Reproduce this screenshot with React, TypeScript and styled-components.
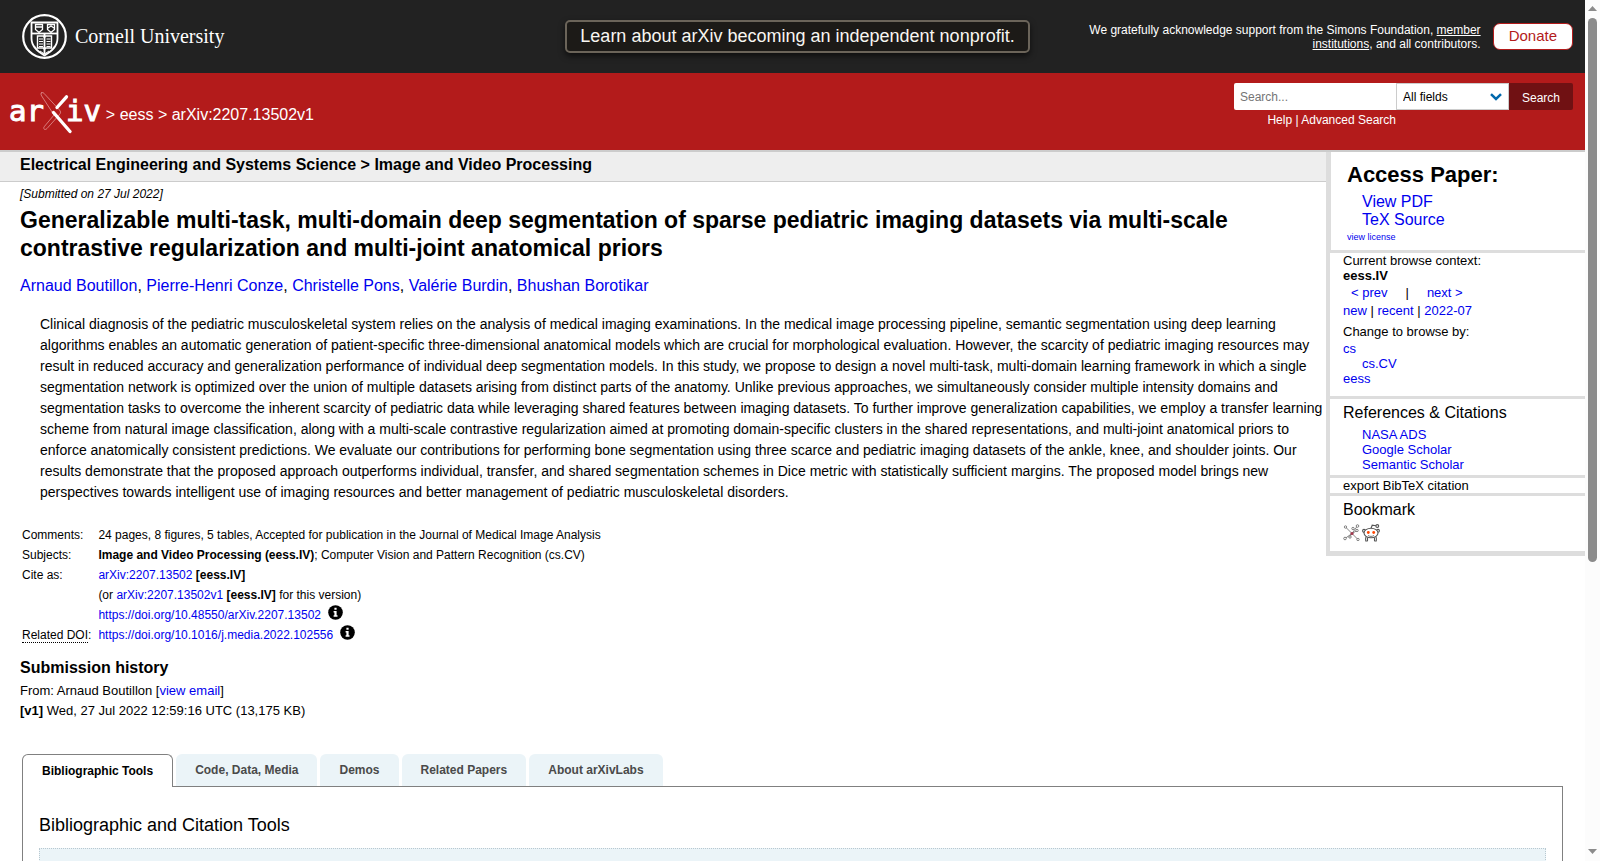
import React from "react";
import styled, { createGlobalStyle } from "styled-components";

const GlobalStyle = createGlobalStyle`
  * { box-sizing: border-box; }
  body {
    margin: 0;
    background: #fff;
    color: #000;
    font-family: "Liberation Sans", Arial, sans-serif;
    font-size: 13px;
  }
  h1, h2, h3, p, ul, blockquote { margin: 0; padding: 0; }
  ul { list-style: none; }
  a { color: #0000ee; text-decoration: none; }
`;

const Window = styled.div`
  display: flex;
  height: 100vh;
  overflow: hidden;
`;

const Page = styled.div`
  flex: 1;
  min-width: 0;
`;

/* ---------- scroll bar ---------- */

const ScrollTrack = styled.div`
  flex: 0 0 15px;
  display: flex;
  flex-direction: column;
  align-items: center;
  background: #fcfcfc;
  padding: 6px 0 7px;
  gap: 7px;
`;

const ScrollRail = styled.div`
  flex: 1;
  width: 9px;
`;

const ScrollThumb = styled.div`
  height: 66%;
  border-radius: 5px;
  background: #8b8b8b;
`;

const ScrollArrow = styled.svg`
  display: block;
  width: 9px;
  height: 5px;
  fill: #8b8b8b;
`;

/* ---------- Cornell bar ---------- */

const TopBar = styled.header`
  display: grid;
  grid-template-columns: 1fr auto 1fr;
  height: 73px;
  padding: 0 12px 0 22px;
  background: #222;
  color: #fff;
`;

const University = styled.a`
  display: flex;
  align-items: center;
  gap: 8px;
  color: #fff;
  font-family: "Liberation Serif", serif;
  font-size: 20px;
`;

const Banner = styled.a`
  align-self: start;
  margin-top: 20px;
  height: 33px;
  padding: 0 13px;
  border: 2px solid #6b6459;
  border-radius: 5px;
  background: #1c1a17;
  box-shadow: 0 3px 6px rgba(0, 0, 0, 0.6);
  color: #f8f6f1;
  font-size: 18px;
  line-height: 28px;
`;

const Support = styled.div`
  display: flex;
  align-items: center;
  justify-content: flex-end;
  gap: 12px;
`;

const SupportText = styled.p`
  width: 400px;
  text-align: right;
  font-size: 12px;
  line-height: 14px;
  a { color: #fff; text-decoration: underline; }
`;

const Donate = styled.a`
  height: 27px;
  padding: 0 15px;
  border: 1px solid #b31b1b;
  border-radius: 7px;
  background: #fff;
  color: #b31b1b;
  font-size: 15px;
  line-height: 24px;
`;

/* ---------- red bar ---------- */

const RedBar = styled.div`
  display: flex;
  justify-content: space-between;
  height: 79px;
  padding: 10px 12px 0 9px;
  border-bottom: 2px solid #ccc;
  background: #b31b1b;
  color: #fff;
  a { color: #fff; }
`;

const Crumbs = styled.div`
  display: flex;
  align-items: center;
  gap: 5px;
  height: 64px;
  font-size: 16px;
`;

const Logo = styled.a`
  display: flex;
  align-items: center;
  margin-bottom: 4px;
  font-family: "DejaVu Sans Mono", monospace;
  font-size: 29px;
  line-height: 36px;
  -webkit-text-stroke: 1px #fff;
  span { padding-bottom: 4px; }
  svg { margin: 0 -6px 0 -4px; }
`;

const SearchForm = styled.form`
  display: flex;
  flex-direction: column;
  font-size: 12px;
`;

const SearchRow = styled.div`
  display: flex;
  height: 27px;
`;

const SearchInput = styled.input`
  width: 162px;
  padding: 0 6px;
  border: 0;
  border-radius: 2px 0 0 2px;
  background: #fff;
  font: 12px "Liberation Sans", Arial, sans-serif;
  &::placeholder { color: #757575; }
`;

const SelectBox = styled.div`
  display: grid;
  align-items: center;
  width: 113px;
  select, svg { grid-area: 1 / 1; }
  svg { justify-self: end; margin-right: 7px; pointer-events: none; }
`;

const FieldSelect = styled.select`
  appearance: none;
  height: 27px;
  padding: 0 6px;
  border: 1px solid #ccc;
  border-radius: 0;
  background: #fff;
  color: #000;
  font: 12px "Liberation Sans", Arial, sans-serif;
`;

const SearchButton = styled.button`
  width: 64px;
  padding: 2px 0 0;
  border: 0;
  border-radius: 0 2px 2px 0;
  background: #701113;
  color: #fff;
  font: 12px "Liberation Sans", Arial, sans-serif;
`;

const SearchHelp = styled.p`
  width: 162px;
  line-height: 20px;
  text-align: right;
`;

/* ---------- paper ---------- */

const Columns = styled.div`
  display: flex;
  align-items: flex-start;
`;

const Paper = styled.main`
  flex: 1;
  min-width: 0;
`;

const SubjectBar = styled.h2`
  height: 30px;
  padding: 0 20px;
  border-bottom: 1px solid #ccc;
  background: #eee;
  font-size: 16px;
  line-height: 25px;
`;

const PaperBody = styled.div`
  padding: 4px 0 0 20px;
`;

const DateLine = styled.p`
  font-size: 12px;
  font-style: italic;
  line-height: 16px;
`;

const Title = styled.h1`
  padding-top: 4px;
  max-width: 1240px;
  font-size: 23px;
  line-height: 28px;
`;

const Authors = styled.p`
  margin-top: 12px;
  font-size: 16px;
  line-height: 24px;
`;

const Abstract = styled.blockquote`
  margin: 16px 0 0 20px;
  max-width: 1284px;
  font-size: 14px;
  line-height: 21px;
`;

const Meta = styled.table`
  margin-top: 22px;
  border-spacing: 0;
  font-size: 12px;
  line-height: 20px;
  th, td { padding: 0 0 0 2px; font-weight: 400; text-align: left; vertical-align: top; }
  th { padding-right: 5px; }
  abbr { text-decoration: none; border-bottom: 1px dotted #000; }
  svg { margin-left: 7px; vertical-align: -1px; }
`;

const History = styled.section`
  margin-top: 13px;
  font-size: 13px;
  line-height: 20px;
  h2 { margin-bottom: 3px; font-size: 16px; }
`;

/* ---------- side column ---------- */

const Side = styled.aside`
  flex: 0 0 259px;
  border-left: 4px solid #ddd;
  border-bottom: 2px solid #ddd;
`;

const SideBox = styled.section<{ $h: number; $indent?: boolean }>`
  height: ${(p) => p.$h}px;
  padding: 0 ${(p) => (p.$indent ? 16 : 13)}px;
  border-left: ${(p) => (p.$indent ? 1 : 0)}px solid #ddd;
  border-bottom: 3px solid #ddd;
  line-height: 15px;
`;

const AccessHeading = styled.h2`
  padding: 10px 0 6px;
  font-size: 22px;
  line-height: 25px;
`;

const LinkList = styled.ul<{ $large?: boolean }>`
  padding-left: ${(p) => (p.$large ? 15 : 19)}px;
  font-size: ${(p) => (p.$large ? 16 : 13)}px;
  line-height: ${(p) => (p.$large ? 18 : 15)}px;
`;

const License = styled.a`
  display: block;
  font-size: 9px;
  line-height: 17px;
`;

const Pager = styled.div`
  display: flex;
  gap: 18px;
  padding: 0 8px;
  line-height: 20px;
`;

const Periods = styled.div`
  padding-bottom: 4px;
  line-height: 16px;
`;

const BrowseLabel = styled.div`
  line-height: 18px;
`;

const SideHeading = styled.h3`
  padding: 4px 0;
  font-size: 16px;
  font-weight: 400;
  line-height: 20px;
`;

const ExportButton = styled.button`
  display: block;
  padding: 0;
  border: 0;
  background: none;
  color: #000;
  font: 13px/16px "Liberation Sans", Arial, sans-serif;
`;

const Bookmarks = styled.div`
  display: flex;
  gap: 2px;
`;

/* ---------- labs tabs ---------- */

const Labs = styled.section`
  margin: 33px 22px 0;
`;

const Tabs = styled.div`
  display: flex;
  gap: 3px;
  height: 32px;
`;

const Tab = styled.button<{ $active?: boolean }>`
  position: relative;
  height: ${(p) => (p.$active ? 33 : 32)}px;
  padding: 0 19px;
  border: ${(p) => (p.$active ? "1px solid #808080" : "0")};
  border-bottom: 0;
  border-radius: 6px 6px 0 0;
  background: ${(p) => (p.$active ? "#fff" : "#ebf4f8")};
  color: ${(p) => (p.$active ? "#000" : "#4a4a4a")};
  font: bold 12px "Liberation Sans", Arial, sans-serif;
`;

const TabPanel = styled.div`
  height: 300px;
  padding: 23px 16px 0;
  border: 1px solid #808080;
`;

const PanelHeading = styled.h2`
  font-size: 18px;
  font-weight: 400;
  line-height: 30px;
`;

const ToolBox = styled.div`
  height: 200px;
  margin-top: 8px;
  border: 1px dotted #b8c8d0;
  background: #ebf4f8;
`;

const Seal = () => (
  <svg width="45" height="45" viewBox="0 0 45 45" fill="none" stroke="#fff" aria-hidden="true">
    <circle cx="22.5" cy="22.5" r="21.3" strokeWidth="2.2" />
    <path d="M9.5 8.5h26v16c0 8-6 12.500-13 17-7-4.500-13-9-13-17z" strokeWidth="1.800" />
    <path d="M9.500 19.500h26" strokeWidth="1.800" />
    <path d="M13.500 10.500h7v5l-3.500 3-3.500-3zM14 13h6M25.500 10.500h7v5l-3.500 3-3.500-3zM26 14l3-2 3 2" strokeWidth="1.300" />
    <path d="M22.500 20v20" strokeWidth="1.800" />
    <path d="M15.500 22h6l1 1.500 1-1.500h6v12h-6l-1 1.500-1-1.500h-6z" strokeWidth="1.400" />
    <path d="M17 25h4M17 27.500h4M17 30h4M17 32.500h4M24.500 25h4M24.500 27.500h4M24.500 30h4M24.500 32.500h4" strokeWidth="1" />
    <path d="M12 31.500l2.500 3M33 31.500l-2.500 3M18 37l4.500 3 4.500-3" strokeWidth="1" />
  </svg>
);

const Cross = () => (
  <svg width="32" height="42" viewBox="0 0 32 42" fill="none" strokeLinecap="round" aria-hidden="true">
    <path d="M1.500.8c1.200-.8 2.400.2 3.200 1.300L19 17.500c2 2 2 3.300.4 5.200L7 36.500c-1 1.200-2.500 1.200-3 .4-.6-.9-.2-1.700.7-2.800L14 23 1.700 4C.9 2.700.6 1.500 1.500.8z" stroke="#e8a5a5" strokeWidth=".7" />
    <path d="M26.500 4.800L17 15.500" stroke="#fff" strokeWidth="3.300" />
    <path d="M13.500 20.500L30 39.500" stroke="#fff" strokeWidth="3.300" />
  </svg>
);

const Info = () => (
  <svg width="15" height="15" viewBox="0 0 15 15" role="img" aria-label="Focus to learn more">
    <circle cx="7.500" cy="7.500" r="7.300" fill="#000" />
    <path d="M6.400 2.800h2.200v2H6.400zM5.600 6h3v4.200h.9v1.500H5.600v-1.500h.8V7.500h-.8z" fill="#fff" />
  </svg>
);

const BibSonomy = () => (
  <svg width="17" height="17" viewBox="0 0 17 17" fill="none" stroke="#666" aria-hidden="true">
    <path d="M9 9.500L3 3.500M9 9.500l5-7M9 9.500l-7 5M9 9.500l6 6M9 9.500l5-3M9 9.500L6 14" strokeWidth=".8" />
    <g fill="#fff" strokeWidth=".8">
      <circle cx="2.500" cy="3" r="1.200" /><circle cx="10" cy="4.500" r="1.200" /><circle cx="14.500" cy="2" r="1.300" />
      <circle cx="14" cy="6.500" r="1.200" /><circle cx="2" cy="14.500" r="1.300" /><circle cx="7" cy="13" r="1.200" />
      <circle cx="15" cy="15.500" r="1.200" />
    </g>
    <circle cx="9" cy="9.500" r="1.600" fill="#a33a50" stroke="none" />
  </svg>
);

const Reddit = () => (
  <svg width="18" height="18" viewBox="0 0 18 18" fill="none" stroke="#555" strokeWidth="1.100" aria-hidden="true">
    <path d="M9 4.500l1.200-3.300 3.800.6" />
    <circle cx="15.300" cy="2" r="1.400" />
    <path d="M5.500 13.500v3.500M12.500 13.500v3.500M3.300 17h2.400M12.300 17h2.400M4.200 12.500c-.6 1.200-.8 2.500-.6 4M13.800 12.500c.6 1.200.8 2.500.6 4" />
    <circle cx="2" cy="6.800" r="1.400" /><circle cx="16" cy="6.800" r="1.400" />
    <ellipse cx="9" cy="9" rx="7" ry="4.800" fill="#fff" />
    <path d="M6 11.500c2 1.200 4 1.200 6 0" strokeWidth=".8" />
    <circle cx="6.300" cy="8.500" r="1.400" fill="#ff4500" stroke="none" />
    <circle cx="11.700" cy="8.500" r="1.400" fill="#ff4500" stroke="none" />
  </svg>
);

const authors = ["Arnaud Boutillon", "Pierre-Henri Conze", "Christelle Pons", "Valérie Burdin", "Bhushan Borotikar"];
const labTabs = ["Bibliographic Tools", "Code, Data, Media", "Demos", "Related Papers", "About arXivLabs"];

export default function App() {
  return (
    <>
      <GlobalStyle />
      <Window>
        <Page>
          <TopBar>
            <University href="#"><Seal />Cornell University</University>
            <Banner href="#">Learn about arXiv becoming an independent nonprofit.</Banner>
            <Support>
              <SupportText>
                We gratefully acknowledge support from the Simons Foundation, <a href="#">member institutions</a>, and all contributors.
              </SupportText>
              <Donate href="#">Donate</Donate>
            </Support>
          </TopBar>

          <RedBar>
            <Crumbs>
              <Logo href="#" aria-label="arXiv"><span>ar</span><Cross /><span>iv</span></Logo>
              <span>&gt; <a href="#">eess</a> &gt; arXiv:2207.13502v1</span>
            </Crumbs>
            <SearchForm onSubmit={(e) => e.preventDefault()}>
              <SearchRow>
                <SearchInput placeholder="Search..." aria-label="Search term or terms" />
                <SelectBox>
                  <FieldSelect aria-label="Field to search"><option>All fields</option></FieldSelect>
                  <svg width="12" height="8" viewBox="0 0 12 8" fill="none" stroke="#0068ac" strokeWidth="2.500" aria-hidden="true">
                    <path d="M1 1.200l5 4.800 5-4.800" />
                  </svg>
                </SelectBox>
                <SearchButton>Search</SearchButton>
              </SearchRow>
              <SearchHelp><a href="#">Help</a> | <a href="#">Advanced Search</a></SearchHelp>
            </SearchForm>
          </RedBar>

          <Columns>
            <Paper>
              <SubjectBar>Electrical Engineering and Systems Science &gt; Image and Video Processing</SubjectBar>
              <PaperBody>
                <DateLine>[Submitted on 27 Jul 2022]</DateLine>
                <Title>
                  Generalizable multi-task, multi-domain deep segmentation of sparse pediatric imaging datasets via multi-scale
                  contrastive regularization and multi-joint anatomical priors
                </Title>
                <Authors>
                  {authors.map((name, i) => (
                    <React.Fragment key={name}>{i > 0 && ", "}<a href="#">{name}</a></React.Fragment>
                  ))}
                </Authors>
                <Abstract>
                  Clinical diagnosis of the pediatric musculoskeletal system relies on the analysis of medical imaging examinations. In the medical image processing pipeline, semantic segmentation using deep learning algorithms enables an automatic generation of patient-specific three-dimensional anatomical models which are crucial for morphological evaluation. However, the scarcity of pediatric imaging resources may result in reduced accuracy and generalization performance of individual deep segmentation models. In this study, we propose to design a novel multi-task, multi-domain learning framework in which a single segmentation network is optimized over the union of multiple datasets arising from distinct parts of the anatomy. Unlike previous approaches, we simultaneously consider multiple intensity domains and segmentation tasks to overcome the inherent scarcity of pediatric data while leveraging shared features between imaging datasets. To further improve generalization capabilities, we employ a transfer learning scheme from natural image classification, along with a multi-scale contrastive regularization aimed at promoting domain-specific clusters in the shared representations, and multi-joint anatomical priors to enforce anatomically consistent predictions. We evaluate our contributions for performing bone segmentation using three scarce and pediatric imaging datasets of the ankle, knee, and shoulder joints. Our results demonstrate that the proposed approach outperforms individual, transfer, and shared segmentation schemes in Dice metric with statistically sufficient margins. The proposed model brings new perspectives towards intelligent use of imaging resources and better management of pediatric musculoskeletal disorders.
                </Abstract>
                <Meta>
                  <tbody>
                    <tr><th scope="row">Comments:</th><td>24 pages, 8 figures, 5 tables, Accepted for publication in the Journal of Medical Image Analysis</td></tr>
                    <tr><th scope="row">Subjects:</th><td><b>Image and Video Processing (eess.IV)</b>; Computer Vision and Pattern Recognition (cs.CV)</td></tr>
                    <tr><th scope="row">Cite as:</th><td><a href="#">arXiv:2207.13502</a> <b>[eess.IV]</b></td></tr>
                    <tr><th /><td>(or <a href="#">arXiv:2207.13502v1</a> <b>[eess.IV]</b> for this version)</td></tr>
                    <tr><th /><td><a href="#">https://doi.org/10.48550/arXiv.2207.13502</a><Info /></td></tr>
                    <tr><th scope="row"><abbr>Related DOI</abbr>:</th><td><a href="#">https://doi.org/10.1016/j.media.2022.102556</a><Info /></td></tr>
                  </tbody>
                </Meta>
                <History>
                  <h2>Submission history</h2>
                  <p>From: Arnaud Boutillon [<a href="#">view email</a>]</p>
                  <p><b>[v1]</b> Wed, 27 Jul 2022 12:59:16 UTC (13,175 KB)</p>
                </History>
              </PaperBody>
            </Paper>

            <Side>
              <SideBox $h={101} $indent>
                <AccessHeading>Access Paper:</AccessHeading>
                <LinkList $large>
                  <li><a href="#">View PDF</a></li>
                  <li><a href="#">TeX Source</a></li>
                </LinkList>
                <License href="#">view license</License>
              </SideBox>
              <SideBox $h={146}>
                <div>Current browse context:</div>
                <b>eess.IV</b>
                <Pager><a href="#">&lt; prev</a><span>|</span><a href="#">next &gt;</a></Pager>
                <Periods><a href="#">new</a> | <a href="#">recent</a> | <a href="#">2022-07</a></Periods>
                <BrowseLabel>Change to browse by:</BrowseLabel>
                <a href="#">cs</a>
                <LinkList><li><a href="#">cs.CV</a></li></LinkList>
                <a href="#">eess</a>
              </SideBox>
              <SideBox $h={79}>
                <SideHeading>References &amp; Citations</SideHeading>
                <LinkList>
                  <li><a href="#">NASA ADS</a></li>
                  <li><a href="#">Google Scholar</a></li>
                  <li><a href="#">Semantic Scholar</a></li>
                </LinkList>
              </SideBox>
              <SideBox $h={18}><ExportButton>export BibTeX citation</ExportButton></SideBox>
              <SideBox $h={58}>
                <SideHeading>Bookmark</SideHeading>
                <Bookmarks>
                  <a href="#" aria-label="BibSonomy"><BibSonomy /></a>
                  <a href="#" aria-label="Reddit"><Reddit /></a>
                </Bookmarks>
              </SideBox>
            </Side>
          </Columns>

          <Labs>
            <Tabs role="tablist">
              {labTabs.map((t, i) => (
                <Tab key={t} role="tab" aria-selected={i === 0} $active={i === 0}>{t}</Tab>
              ))}
            </Tabs>
            <TabPanel role="tabpanel">
              <PanelHeading>Bibliographic and Citation Tools</PanelHeading>
              <ToolBox />
            </TabPanel>
          </Labs>
        </Page>
        <ScrollTrack aria-hidden="true">
          <ScrollArrow viewBox="0 0 9 5"><path d="M0 5L4.500 0 9 5z" /></ScrollArrow>
          <ScrollRail><ScrollThumb /></ScrollRail>
          <ScrollArrow viewBox="0 0 9 5"><path d="M0 0L4.500 5 9 0z" /></ScrollArrow>
        </ScrollTrack>
      </Window>
    </>
  );
}
